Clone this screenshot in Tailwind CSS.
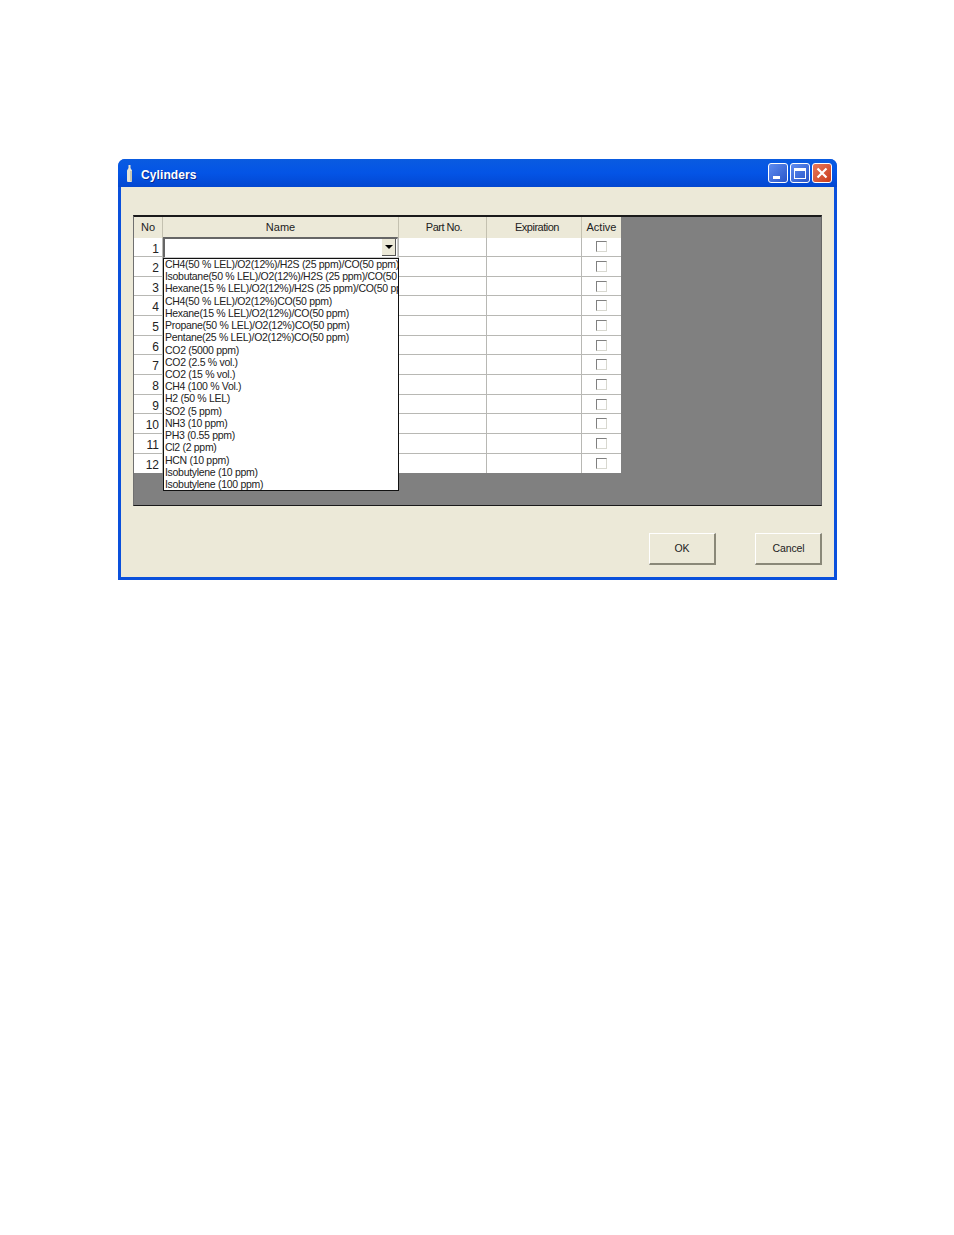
<!DOCTYPE html>
<html>
<head>
<meta charset="utf-8">
<script src="https://cdn.jsdelivr.net/npm/@tailwindcss/browser@4"></script>
</head>
<body class="bg-white h-[1235px] overflow-hidden font-['Liberation_Sans',Arial,sans-serif] text-[#222]">
<div class="pt-[159px] pl-[118px]">
  <div class="w-[719px] h-[421px] rounded-t-[7px] bg-[#0a50dc] flex flex-col overflow-hidden">
    <div class="h-[28px] shrink-0 bg-gradient-to-b from-[#0a5be0] via-[#0454e6] to-[#0347d0] flex items-center pl-[8px] pr-[5px]">
      <svg class="w-[7px] h-[17px] mr-[8px]" viewBox="0 0 7 17"><path d="M2.500 0h2v3l1.500 2.500V16a1 1 0 0 1-1 1H2a1 1 0 0 1-1-1V5.500L2.500 3z" fill="#e8e4d4"/><path d="M4.500 6h1v10h-1z" fill="#a8a890"/></svg>
      <span class="text-white font-bold text-[12px] tracking-[0.1px] pt-[3px] [text-shadow:1px_1px_0_#0a2a90]">Cylinders</span>
      <div class="ml-auto flex gap-[2px]">
        <div class="w-[20px] h-[20px] rounded-[3px] border border-white bg-gradient-to-br from-[#5f8cf0] to-[#2a55c8] relative"><div class="absolute left-[4px] bottom-[3px] w-[7px] h-[3px] bg-white"></div></div>
        <div class="w-[20px] h-[20px] rounded-[3px] border border-white bg-gradient-to-br from-[#5f8cf0] to-[#2a55c8] flex items-center justify-center"><div class="w-[12px] h-[11px] border border-white border-t-[3px]"></div></div>
        <div class="w-[20px] h-[20px] rounded-[3px] border border-white bg-gradient-to-br from-[#e8775a] to-[#c83a18] flex items-center justify-center">
          <svg class="w-[12px] h-[12px]" viewBox="0 0 12 12"><path d="M1.500 1.500l9 9M10.500 1.500l-9 9" stroke="#fff" stroke-width="2.200"/></svg>
        </div>
      </div>
    </div>
    <div class="flex-1 mx-[3px] mb-[3px] bg-[#ece9d8] pt-[28px] pl-[12px] relative">
      <div class="w-[689px] h-[291px] bg-[#808080] border-t-2 border-t-[#1a1a1a] border-b border-b-[#1a1a1a] border-l border-l-[#707070] border-r border-r-[#666] relative">
        <div class="w-[487px] bg-white">
          <div class="flex h-[20.500px] bg-[#ece9d8] text-[11px] leading-[21px] text-center">
            <div class="w-[29px] border-r border-r-[#c4c1b0]">No</div>
            <div class="w-[236px] border-r border-r-[#c4c1b0]">Name</div>
            <div class="w-[88px] border-r border-r-[#c4c1b0] pl-[3px] tracking-[-0.5px]">Part No.</div>
            <div class="w-[95px] border-r border-r-[#c4c1b0] pl-[6px] tracking-[-0.5px]">Expiration</div>
            <div class="w-[39px]">Active</div>
          </div>
          <div class="flex h-[19.670px] border-b border-b-[#b8b8b4] text-[12px] leading-[22px]"><div class="w-[29px] pr-[3px] text-right bg-white border-r border-r-[#b8b8b4]">1</div><div class="w-[236px] border-r border-r-[#b8b8b4]"></div><div class="w-[88px] border-r border-r-[#b8b8b4]"></div><div class="w-[95px] border-r border-r-[#b8b8b4]"></div><div class="w-[39px] flex items-center justify-center pr-[1px]"><div class="w-[11px] h-[11px] border border-t-[#808080] border-l-[#808080] border-r-[#d8d8d0] border-b-[#d8d8d0]"></div></div></div>
          <div class="flex h-[19.670px] border-b border-b-[#b8b8b4] text-[12px] leading-[22px]"><div class="w-[29px] pr-[3px] text-right bg-white border-r border-r-[#b8b8b4]">2</div><div class="w-[236px] border-r border-r-[#b8b8b4]"></div><div class="w-[88px] border-r border-r-[#b8b8b4]"></div><div class="w-[95px] border-r border-r-[#b8b8b4]"></div><div class="w-[39px] flex items-center justify-center pr-[1px]"><div class="w-[11px] h-[11px] border border-t-[#808080] border-l-[#808080] border-r-[#d8d8d0] border-b-[#d8d8d0]"></div></div></div>
          <div class="flex h-[19.670px] border-b border-b-[#b8b8b4] text-[12px] leading-[22px]"><div class="w-[29px] pr-[3px] text-right bg-white border-r border-r-[#b8b8b4]">3</div><div class="w-[236px] border-r border-r-[#b8b8b4]"></div><div class="w-[88px] border-r border-r-[#b8b8b4]"></div><div class="w-[95px] border-r border-r-[#b8b8b4]"></div><div class="w-[39px] flex items-center justify-center pr-[1px]"><div class="w-[11px] h-[11px] border border-t-[#808080] border-l-[#808080] border-r-[#d8d8d0] border-b-[#d8d8d0]"></div></div></div>
          <div class="flex h-[19.670px] border-b border-b-[#b8b8b4] text-[12px] leading-[22px]"><div class="w-[29px] pr-[3px] text-right bg-white border-r border-r-[#b8b8b4]">4</div><div class="w-[236px] border-r border-r-[#b8b8b4]"></div><div class="w-[88px] border-r border-r-[#b8b8b4]"></div><div class="w-[95px] border-r border-r-[#b8b8b4]"></div><div class="w-[39px] flex items-center justify-center pr-[1px]"><div class="w-[11px] h-[11px] border border-t-[#808080] border-l-[#808080] border-r-[#d8d8d0] border-b-[#d8d8d0]"></div></div></div>
          <div class="flex h-[19.670px] border-b border-b-[#b8b8b4] text-[12px] leading-[22px]"><div class="w-[29px] pr-[3px] text-right bg-white border-r border-r-[#b8b8b4]">5</div><div class="w-[236px] border-r border-r-[#b8b8b4]"></div><div class="w-[88px] border-r border-r-[#b8b8b4]"></div><div class="w-[95px] border-r border-r-[#b8b8b4]"></div><div class="w-[39px] flex items-center justify-center pr-[1px]"><div class="w-[11px] h-[11px] border border-t-[#808080] border-l-[#808080] border-r-[#d8d8d0] border-b-[#d8d8d0]"></div></div></div>
          <div class="flex h-[19.670px] border-b border-b-[#b8b8b4] text-[12px] leading-[22px]"><div class="w-[29px] pr-[3px] text-right bg-white border-r border-r-[#b8b8b4]">6</div><div class="w-[236px] border-r border-r-[#b8b8b4]"></div><div class="w-[88px] border-r border-r-[#b8b8b4]"></div><div class="w-[95px] border-r border-r-[#b8b8b4]"></div><div class="w-[39px] flex items-center justify-center pr-[1px]"><div class="w-[11px] h-[11px] border border-t-[#808080] border-l-[#808080] border-r-[#d8d8d0] border-b-[#d8d8d0]"></div></div></div>
          <div class="flex h-[19.670px] border-b border-b-[#b8b8b4] text-[12px] leading-[22px]"><div class="w-[29px] pr-[3px] text-right bg-white border-r border-r-[#b8b8b4]">7</div><div class="w-[236px] border-r border-r-[#b8b8b4]"></div><div class="w-[88px] border-r border-r-[#b8b8b4]"></div><div class="w-[95px] border-r border-r-[#b8b8b4]"></div><div class="w-[39px] flex items-center justify-center pr-[1px]"><div class="w-[11px] h-[11px] border border-t-[#808080] border-l-[#808080] border-r-[#d8d8d0] border-b-[#d8d8d0]"></div></div></div>
          <div class="flex h-[19.670px] border-b border-b-[#b8b8b4] text-[12px] leading-[22px]"><div class="w-[29px] pr-[3px] text-right bg-white border-r border-r-[#b8b8b4]">8</div><div class="w-[236px] border-r border-r-[#b8b8b4]"></div><div class="w-[88px] border-r border-r-[#b8b8b4]"></div><div class="w-[95px] border-r border-r-[#b8b8b4]"></div><div class="w-[39px] flex items-center justify-center pr-[1px]"><div class="w-[11px] h-[11px] border border-t-[#808080] border-l-[#808080] border-r-[#d8d8d0] border-b-[#d8d8d0]"></div></div></div>
          <div class="flex h-[19.670px] border-b border-b-[#b8b8b4] text-[12px] leading-[22px]"><div class="w-[29px] pr-[3px] text-right bg-white border-r border-r-[#b8b8b4]">9</div><div class="w-[236px] border-r border-r-[#b8b8b4]"></div><div class="w-[88px] border-r border-r-[#b8b8b4]"></div><div class="w-[95px] border-r border-r-[#b8b8b4]"></div><div class="w-[39px] flex items-center justify-center pr-[1px]"><div class="w-[11px] h-[11px] border border-t-[#808080] border-l-[#808080] border-r-[#d8d8d0] border-b-[#d8d8d0]"></div></div></div>
          <div class="flex h-[19.670px] border-b border-b-[#b8b8b4] text-[12px] leading-[22px]"><div class="w-[29px] pr-[3px] text-right bg-white border-r border-r-[#b8b8b4]">10</div><div class="w-[236px] border-r border-r-[#b8b8b4]"></div><div class="w-[88px] border-r border-r-[#b8b8b4]"></div><div class="w-[95px] border-r border-r-[#b8b8b4]"></div><div class="w-[39px] flex items-center justify-center pr-[1px]"><div class="w-[11px] h-[11px] border border-t-[#808080] border-l-[#808080] border-r-[#d8d8d0] border-b-[#d8d8d0]"></div></div></div>
          <div class="flex h-[19.670px] border-b border-b-[#b8b8b4] text-[12px] leading-[22px]"><div class="w-[29px] pr-[3px] text-right bg-white border-r border-r-[#b8b8b4]">11</div><div class="w-[236px] border-r border-r-[#b8b8b4]"></div><div class="w-[88px] border-r border-r-[#b8b8b4]"></div><div class="w-[95px] border-r border-r-[#b8b8b4]"></div><div class="w-[39px] flex items-center justify-center pr-[1px]"><div class="w-[11px] h-[11px] border border-t-[#808080] border-l-[#808080] border-r-[#d8d8d0] border-b-[#d8d8d0]"></div></div></div>
          <div class="flex h-[19.670px] text-[12px] leading-[22px]"><div class="w-[29px] pr-[3px] text-right bg-white border-r border-r-[#b8b8b4]">12</div><div class="w-[236px] border-r border-r-[#b8b8b4]"></div><div class="w-[88px] border-r border-r-[#b8b8b4]"></div><div class="w-[95px] border-r border-r-[#b8b8b4]"></div><div class="w-[39px] flex items-center justify-center pr-[1px]"><div class="w-[11px] h-[11px] border border-t-[#808080] border-l-[#808080] border-r-[#d8d8d0] border-b-[#d8d8d0]"></div></div></div>
        </div>
        <div class="absolute left-[29px] top-[20px] w-[235px] h-[21px] bg-white border-t-2 border-l-2 border-t-[#666] border-l-[#666] border-b border-r border-b-[#ccc] border-r-[#ccc]">
          <div class="absolute right-[1px] top-0 w-[14px] h-[17px] bg-[#ece9d8] border-r border-b border-r-[#555] border-b-[#555] flex items-center justify-center">
            <svg class="w-[8px] h-[4px]" viewBox="0 0 8 4"><path d="M0 0h8L4 4z" fill="#000"/></svg>
          </div>
        </div>
        <div class="absolute left-[29px] top-[41px] w-[236px] h-[233px] bg-white border border-[#111] overflow-hidden pl-[1px] text-[10.500px] tracking-[-0.300px] leading-[12.220px] whitespace-nowrap">
          <div class="-mt-[1px]">CH4(50 % LEL)/O2(12%)/H2S (25 ppm)/CO(50 ppm)</div>
          <div>Isobutane(50 % LEL)/O2(12%)/H2S (25 ppm)/CO(50 ppm)</div>
          <div>Hexane(15 % LEL)/O2(12%)/H2S (25 ppm)/CO(50 ppm)</div>
          <div>CH4(50 % LEL)/O2(12%)CO(50 ppm)</div>
          <div>Hexane(15 % LEL)/O2(12%)/CO(50 ppm)</div>
          <div>Propane(50 % LEL)/O2(12%)CO(50 ppm)</div>
          <div>Pentane(25 % LEL)/O2(12%)CO(50 ppm)</div>
          <div>CO2 (5000 ppm)</div>
          <div>CO2 (2.5 % vol.)</div>
          <div>CO2 (15 % vol.)</div>
          <div>CH4 (100 % Vol.)</div>
          <div>H2 (50 % LEL)</div>
          <div>SO2 (5 ppm)</div>
          <div>NH3 (10 ppm)</div>
          <div>PH3 (0.55 ppm)</div>
          <div>Cl2 (2 ppm)</div>
          <div>HCN (10 ppm)</div>
          <div>Isobutylene (10 ppm)</div>
          <div>Isobutylene (100 ppm)</div>
        </div>
      </div>
      <div class="flex justify-end gap-[39px] w-[689px] mt-[27px]">
        <button class="w-[67px] h-[32px] bg-[#ece9d8] border border-t-white border-l-white border-r-[#8a8878] border-b-[#8a8878] border-r-2 border-b-2 text-[10.500px]">OK</button>
        <button class="w-[67px] h-[32px] bg-[#ece9d8] border border-t-white border-l-white border-r-[#8a8878] border-b-[#8a8878] border-r-2 border-b-2 text-[10.500px] pl-[1px] tracking-[-0.100px]">Cancel</button>
      </div>
    </div>
  </div>
</div>
</body>
</html>
